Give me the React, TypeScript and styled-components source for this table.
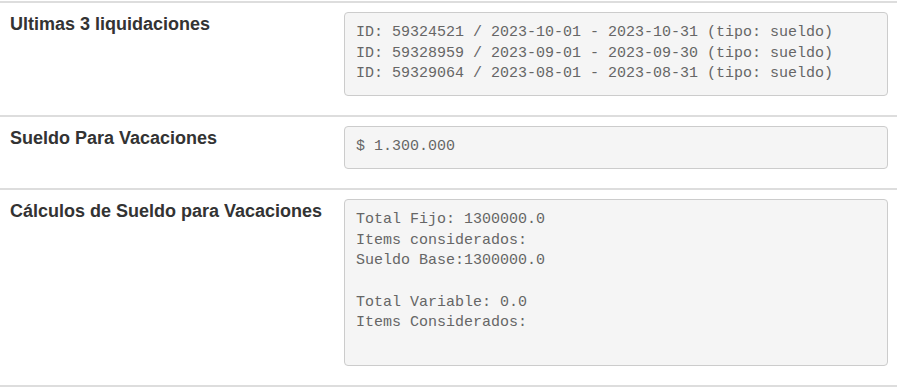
import styled, { createGlobalStyle } from 'styled-components';

const GlobalStyle = createGlobalStyle`
  html,
  body {
    margin: 0;
    padding: 0;
    background: #ffffff;
  }

  body {
    font-family: 'Liberation Sans', Arial, sans-serif;
    color: #333333;
  }
`;

const Page = styled.div`
  width: 897px;
  padding-top: 1px;
`;

const FieldList = styled.div`
  display: flex;
  flex-direction: column;
  border-bottom: 2px solid #dddddd;
`;

const FieldRow = styled.section`
  display: grid;
  grid-template-columns: 344px 1fr;
  align-items: start;
  padding: 9px 9px 19px 0;
  border-top: 2px solid #dddddd;
`;

const FieldLabel = styled.h4`
  margin: 0;
  padding: 3px 0 0 10px;
  font-size: 18px;
  font-weight: 700;
  line-height: 1.1;
  color: #333333;
`;

const ValueBox = styled.pre`
  margin: 0;
  padding: 10px 11px;
  font-family: 'Liberation Mono', 'Courier New', monospace;
  font-size: 15px;
  line-height: 20.7px;
  color: #666666;
  white-space: pre;
  background-color: #f5f5f5;
  border: 1px solid #cccccc;
  border-radius: 4px;
`;

type Field = {
  label: string;
  value: string;
};

const fields: Field[] = [
  {
    label: 'Ultimas 3 liquidaciones',
    value: [
      'ID: 59324521 / 2023-10-01 - 2023-10-31 (tipo: sueldo)',
      'ID: 59328959 / 2023-09-01 - 2023-09-30 (tipo: sueldo)',
      'ID: 59329064 / 2023-08-01 - 2023-08-31 (tipo: sueldo)',
    ].join('\n'),
  },
  {
    label: 'Sueldo Para Vacaciones',
    value: '$ 1.300.000',
  },
  {
    label: 'Cálculos de Sueldo para Vacaciones',
    value: [
      'Total Fijo: 1300000.0',
      'Items considerados:',
      'Sueldo Base:1300000.0',
      '',
      'Total Variable: 0.0',
      'Items Considerados:',
      '',
      '',
    ].join('\n'),
  },
];

const App = () => (
  <>
    <GlobalStyle />
    <Page>
      <FieldList>
        {fields.map((field) => (
          <FieldRow key={field.label}>
            <FieldLabel>{field.label}</FieldLabel>
            <ValueBox>{field.value}</ValueBox>
          </FieldRow>
        ))}
      </FieldList>
    </Page>
  </>
);

export default App;
